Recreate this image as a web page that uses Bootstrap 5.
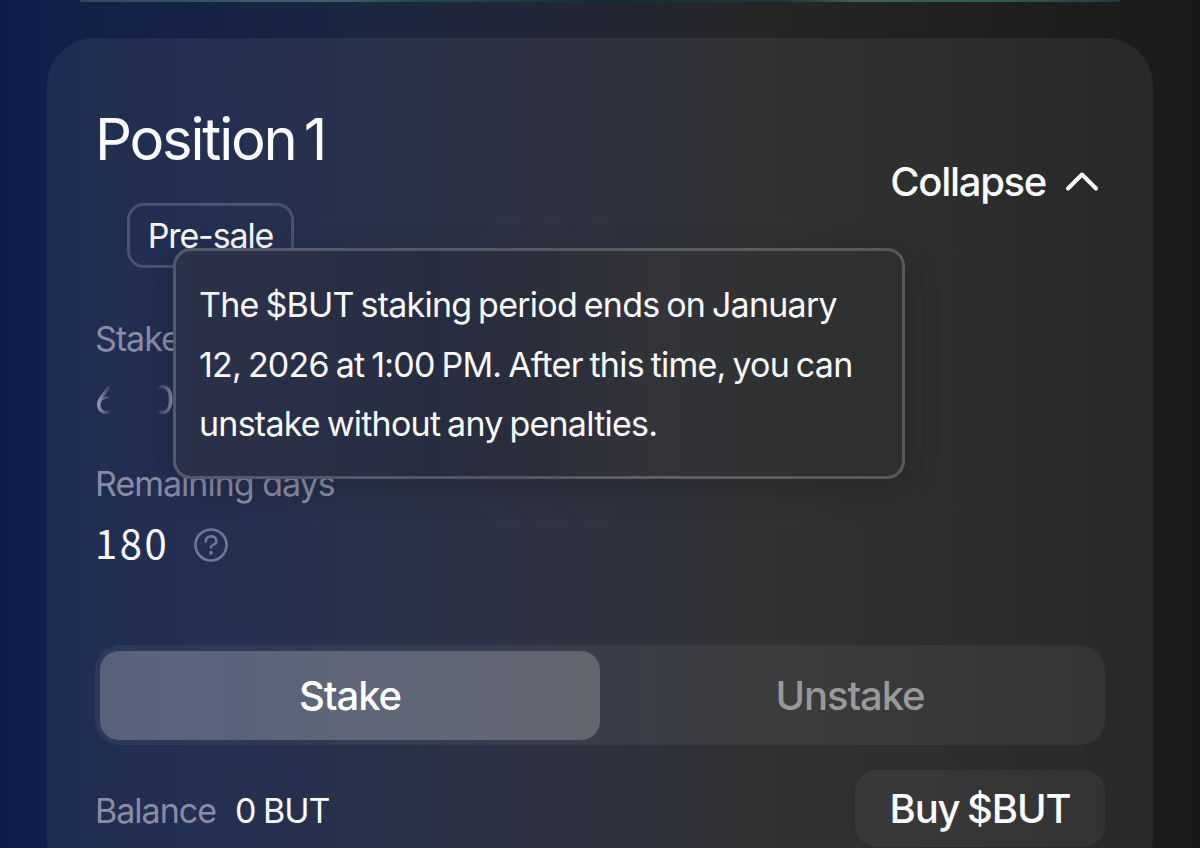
<!DOCTYPE html>
<html lang="en">
<head>
    <meta charset="UTF-8">
    <meta name="viewport" content="width=device-width, initial-scale=1">
    <title>Staking position</title>
    <link rel="stylesheet" href="https://cdn.jsdelivr.net/npm/bootstrap@5.3.0/dist/css/bootstrap.min.css">
    <style>
        html, body { height: 848px; overflow: hidden; }
        body {
            font-family: "Inter", "Liberation Sans", sans-serif;
            color: #fafbff;
            background: linear-gradient(90deg, #0f1b4d 0, #111f4a 46px, #132148 100px, #172248 200px, #1b2640 350px, #20263a 500px, #232631 640px, #262626 770px, #212121 930px, #1b1b1b 1150px, #191919 1200px);
        }

        /* bottom edge of the previous card */
        .prev-edge {
            height: 2px;
            margin: 0 80px 36px;
            border-radius: 0 0 40px 40px;
            background: linear-gradient(90deg, #2a4a57, #40606a 24%, #244d4c 32%, #12302f 50%, #1c3a3c 68%, #3d6656 75%, #2f5a54 88%, #1f3f42);
        }

        .position-card {
            height: 850px;
            margin: 0 47px;
            padding: 64px 48px 0;
            border-radius: 48px;
            background: rgba(255, 255, 255, .06);
        }
        .head-row { height: 165px; }
        .title { font-size: 58px; line-height: 74px; font-weight: 400; letter-spacing: -2.2px; word-spacing: -6px; }
        .tag {
            width: 167px;
            height: 65px;
            margin: 27px 0 0 32px;
            border: 3px solid #4a5270;
            border-radius: 17px;
            font-size: 34px;
            letter-spacing: -1.1px;
        }
        .collapse-link { height: 56px; margin: 52px 5px 0 0; font-size: 40px; font-weight: 500; letter-spacing: -1.3px; }
        .collapse-link svg { margin: -2px 0 0 18px; }

        .muted-label { font-size: 34px; line-height: 48px; color: #888da3; letter-spacing: -1px; }
        .figure-value { font-size: 40px; line-height: 56px; }
        .details { height: 378px; padding-top: 48px; }
        .days-row { padding-top: 10px; }
        .days-value { margin-top: -4px; font-family: "Noto Sans CJK JP", sans-serif; font-size: 40px; letter-spacing: 2.6px; }
        .help { margin: 1px 0 0 24px; }

        /* amount that fades in and out digit by digit */
        .faded-amount {
            width: 82px;
            margin-top: 8px;
            font-family: "Lato", sans-serif;
            letter-spacing: 4.5px;
            color: #b6bacb;
            -webkit-mask-image: linear-gradient(90deg, #000 0, transparent 16px, transparent 62px, #000 84px);
            mask-image: linear-gradient(90deg, #000 0, transparent 16px, transparent 62px, #000 84px);
        }
        .days-label { margin-top: 33px; }

        .tip {
            left: 173px;
            top: 248px;
            width: 732px;
            height: 231px;
            padding: 24px 24px 0 23px;
            border: 3px solid rgba(255, 255, 255, .2);
            border-radius: 18px;
            background: linear-gradient(90deg, #2a314a, #272d41 35%, #2b2d3a 50%, #333438 66%, #2f3031 85%, #2e2f2f) border-box;
            box-shadow: 0 8px 36px rgba(0, 0, 0, .2);
            font-size: 34px;
            line-height: 59.5px;
            letter-spacing: -.76px;
            word-spacing: -2px;
        }

        .switcher { height: 100px; padding: 6px 5px 5px; border-radius: 25px; background: rgba(255, 255, 255, .055); font-size: 40px; font-weight: 500; letter-spacing: -1.1px; }
        .switcher-item { color: #999; }
        .switcher-item.active { color: #fff; border-radius: 19px; background: rgba(255, 255, 255, .21); }

        .bottom-row { margin-top: 25px; }
        .balance { padding-top: 4px; font-size: 34px; line-height: 48px; letter-spacing: -1px; }
        .balance-value { margin-left: 19px; word-spacing: -1px; }
        .buy { width: 250px; height: 77px; border-radius: 22px; background: rgba(255, 255, 255, .05); font-size: 40px; font-weight: 500; letter-spacing: -1.1px; word-spacing: -2px; }
    </style>
</head>
<body>
    <div class="prev-edge"></div>

    <div class="position-card">
        <div class="head-row d-flex justify-content-between">
            <div>
                <h1 class="title m-0">Position 1</h1>
                <div class="tag d-flex align-items-center justify-content-center"><span>Pre-sale</span></div>
            </div>
            <div class="collapse-link d-flex align-items-center">
                <span>Collapse</span>
                <svg width="36" height="24" viewBox="0 0 36 24" fill="none" stroke="#fff" stroke-width="4" stroke-linecap="round" stroke-linejoin="round"><path d="M4 19.5 18 5.5l14 14"/></svg>
            </div>
        </div>

        <div class="details">
            <div class="muted-label">Staked</div>
            <div class="figure-value faded-amount">600</div>
            <div class="muted-label days-label">Remaining days</div>
            <div class="days-row d-flex align-items-center">
                <span class="figure-value days-value">180</span>
                <svg class="help" width="36" height="36" viewBox="0 0 36 36" fill="none" stroke="#70789a" stroke-width="2.6" stroke-linecap="round"><circle cx="18" cy="18" r="15.5"/><path d="M12.8 14.4c0-6.8 10.6-6.5 10.6-.4 0 4.5-5.4 3.3-5.4 6.5"/><circle cx="18" cy="25.8" r="1.3" fill="#70789a" stroke-width="1.4"/></svg>
            </div>
        </div>

        <div class="switcher d-flex">
            <div class="switcher-item active flex-fill w-50 d-flex align-items-center justify-content-center"><span>Stake</span></div>
            <div class="switcher-item flex-fill w-50 d-flex align-items-center justify-content-center"><span>Unstake</span></div>
        </div>

        <div class="bottom-row d-flex align-items-center justify-content-between">
            <div class="d-flex balance"><span class="muted-label">Balance</span><span class="balance-value">0 BUT</span></div>
            <div class="buy d-flex align-items-center justify-content-center"><span>Buy $BUT</span></div>
        </div>
    </div>

    <div class="tip position-absolute">The $BUT staking period ends on January<br>12, 2026 at 1:00 PM. After this time, you can<br>unstake without any penalties.</div>

    <script src="https://cdn.jsdelivr.net/npm/bootstrap@5.3.0/dist/js/bootstrap.bundle.min.js"></script>
</body>
</html>
